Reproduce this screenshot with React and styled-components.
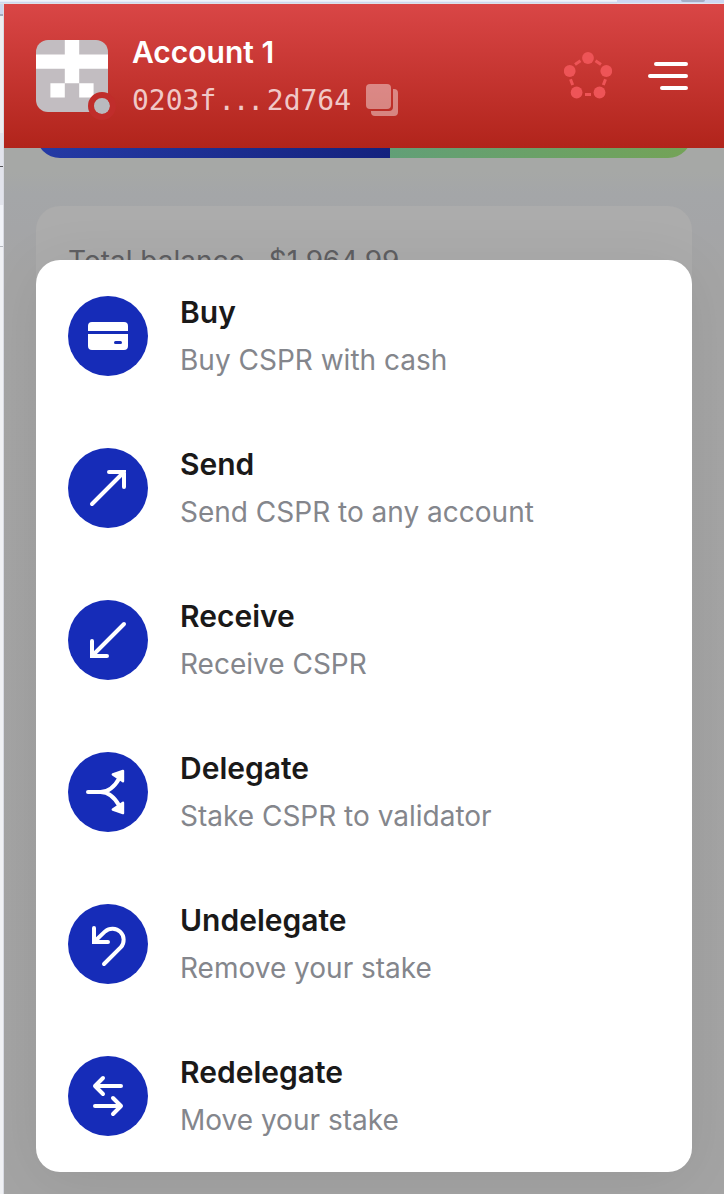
import React from "react";
import styled, { createGlobalStyle } from "styled-components";

const GlobalStyle = createGlobalStyle`
  *, *::before, *::after { box-sizing: border-box; }
  html, body { margin: 0; padding: 0; }
  body {
    width: 724px;
    height: 1194px;
    overflow: hidden;
    font-family: Inter, "Liberation Sans", sans-serif;
    -webkit-font-smoothing: antialiased;
  }
`;

const Desktop = styled.div`
  display: grid;
  grid-template: 4px 1fr / 4px 1fr;
  width: 724px;
  height: 1194px;
  overflow: hidden;
  background: #eeeef0;
`;

const TabStrip = styled.div`
  grid-column: 1 / -1;
  display: flex;
  background: linear-gradient(#f0f3f9 0 1px, #e6ebf7 1px 2px, #cdd7ee 2px 3px, #dde1e8 3px);
`;

const TabEdge = styled.div`
  width: 617px;
`;

const TabRest = styled.div`
  flex: 1;
  padding-left: 64px;
  background: linear-gradient(#cdd8f2 0 3px, #e3e6ec 3px);
`;

const TabButton = styled.div`
  width: 24px;
  height: 2px;
  border-radius: 0 0 12px 12px;
  background: #a4aec6;
`;

const Gutter = styled.div`
  display: flex;
  flex-direction: column;
  border-right: 1px solid #d9dbe3;
`;

const GutterPart = styled.div`
  height: ${(p) => p.$h}px;
  background: ${(p) => p.$color};
`;

const Popup = styled.div`
  position: relative;
  display: flex;
  flex-direction: column;
  overflow: hidden;
  background: linear-gradient(#a6a8a6 0, #a6a8a6 168px, #a4a6a8 190px, #a4a5a7 225px, #a5a5a5 270px, #a4a4a4 100%);
`;

const Header = styled.header`
  position: relative;
  z-index: 2;
  display: flex;
  align-items: center;
  flex: none;
  height: 144px;
  padding: 0 36px 0 32px;
  background: linear-gradient(#d94646, #b1241b);
`;

const Avatar = styled.div`
  position: relative;
  width: 72px;
  height: 72px;
  margin-right: 24px;

  svg { display: block; border-radius: 12px; }
`;

const StatusDot = styled.span`
  position: absolute;
  left: 52px;
  top: 52px;
  width: 28px;
  height: 28px;
  border: 6px solid #c02d2b;
  border-radius: 50%;
  background: #b9babf;
  background-clip: padding-box;
`;

const Identity = styled.div`
  flex: 1;
`;

const AccountName = styled.div`
  font-size: 30px;
  font-weight: 600;
  line-height: 48px;
  color: #fff;
`;

const KeyLine = styled.div`
  display: flex;
  align-items: center;
  height: 48px;
`;

const PublicKey = styled.span`
  display: flex;
  width: 234px;
  padding-top: 2px;
  font-family: "DejaVu Sans Mono", "Liberation Mono", monospace;
  font-size: 28px;
  line-height: 46px;
  color: #f0c8c7;
`;

const Ellipsis = styled.span`
  width: 50.5px;
  padding-left: 2px;
  letter-spacing: -2.4px;
`;

const HeaderActions = styled.div`
  display: flex;
  align-items: center;
  gap: 36px;

  svg { display: block; }
`;

const Page = styled.main`
  display: flex;
  flex: 1;
  flex-direction: column;
  gap: 48px;
  padding: 0 32px;
`;

const BarClip = styled.div`
  display: flex;
  align-items: flex-end;
  height: 10px;
  overflow: hidden;
`;

const NetworkBar = styled.div`
  display: flex;
  flex: none;
  width: 656px;
  height: 64px;
  border-radius: 24px;
  overflow: hidden;
`;

const BarPart = styled.div`
  width: ${(p) => p.$w};
  background: linear-gradient(100deg, ${(p) => p.$from}, ${(p) => p.$to});
`;

const BalanceCard = styled.section`
  display: flex;
  gap: 24px;
  height: 240px;
  padding: 31px 32px;
  border-radius: 24px;
  background: #acacac;
  font-size: 28px;
  line-height: 48px;
  color: #5f5f62;
`;

const Amount = styled.span`
  letter-spacing: -0.15px;
`;

const Menu = styled.nav`
  position: absolute;
  z-index: 1;
  left: 32px;
  top: 256px;
  width: 656px;
  border-radius: 24px;
  background: #fff;
  box-shadow: 0 8px 60px rgba(0, 0, 0, 0.08);
`;

const MenuItem = styled.a`
  display: flex;
  align-items: center;
  gap: 32px;
  height: 152px;
  padding: 0 32px;
`;

const IconDisc = styled.span`
  display: grid;
  place-items: center;
  width: 80px;
  height: 80px;
  border-radius: 50%;
  background: #162cb8;

  svg { display: block; }
`;

const ItemTitle = styled.div`
  font-size: 30px;
  font-weight: 600;
  line-height: 48px;
  color: #1a1919;
`;

const ItemCaption = styled.div`
  font-size: 28px;
  line-height: 48px;
  color: #84868c;
`;

const stroke = { fill: "none", stroke: "#fff", strokeWidth: 4, strokeLinecap: "round", strokeLinejoin: "round" };

const icons = {
  buy: (
    <>
      <path d="M24 26h32a4 4 0 0 1 4 4v5H20v-5a4 4 0 0 1 4-4ZM20 38h40v12a4 4 0 0 1-4 4H24a4 4 0 0 1-4-4Z" fill="#fff" />
      <path d="M47.5 46.5h5" stroke="#162cb8" strokeWidth="3" strokeLinecap="round" />
    </>
  ),
  send: <path d="M24 56 56 24M41 24h15v15" {...stroke} strokeLinejoin="miter" />,
  receive: <path d="M56 24 24 56M24 41v15h15" {...stroke} strokeLinejoin="miter" />,
  delegate: (
    <>
      <path d="M20 40h12.500C41 40 47 34 51.500 26M32.500 40C41 40 47 46 51.500 54" {...stroke} />
      <path d="M55 19v10.200L44.800 22.500Z M55 61v-10.200L44.800 57.500Z" fill="#fff" stroke="#fff" strokeWidth="2.4" strokeLinejoin="round" />
    </>
  ),
  undelegate: <path d="M26 24v14h14M26 38 37.100 27.400A11.200 11.200 0 0 1 52.900 43.200L36 60" {...stroke} strokeLinejoin="miter" />,
  redelegate: <path d="M53 30H27M35 22l-8 8 8 8M27 50h26M45 42l8 8-8 8" {...stroke} />,
};

const items = [
  ["buy", "Buy", "Buy CSPR with cash"],
  ["send", "Send", "Send CSPR to any account"],
  ["receive", "Receive", "Receive CSPR"],
  ["delegate", "Delegate", "Stake CSPR to validator"],
  ["undelegate", "Undelegate", "Remove your stake"],
  ["redelegate", "Redelegate", "Move your stake"],
];

function AccountAvatar() {
  return (
    <Avatar>
      <svg width="72" height="72" viewBox="0 0 5 5">
        <path d="M0 0h5v5H0z" fill="#c2bdc1" />
        <path d="M2 0h1v1h2v1H3v1H2V2H0V1h2zM1 3h1v1H1zM3 3h1v1H3z" fill="#fff" />
      </svg>
      <StatusDot />
    </Avatar>
  );
}

function CopyIcon() {
  return (
    <svg width="32" height="32" viewBox="0 0 32 32" fill="#fff" opacity="0.42">
      <rect width="25" height="25" rx="4" />
      <path d="M27 5h1a4 4 0 0 1 4 4v19a4 4 0 0 1-4 4H9a4 4 0 0 1-4-4v-1h18a4 4 0 0 0 4-4Z" />
    </svg>
  );
}

function NetworkIcon() {
  return (
    <svg width="48" height="48" viewBox="0 0 48 48" fill="#ee5457">
      <circle cx="24" cy="6" r="5.9" />
      <circle cx="5.7" cy="19" r="5.9" />
      <circle cx="42.3" cy="19" r="5.9" />
      <circle cx="12.600" cy="40.500" r="5.9" />
      <circle cx="35.500" cy="40.500" r="5.9" />
      <path d="M11 12.500 16.500 8.700M37 12.500 31.500 8.700M6.500 27.200 8.700 33M41.500 27.200 39.300 33M21 42.400h6" stroke="#ee5457" strokeWidth="3" />
    </svg>
  );
}

function MenuIcon() {
  return (
    <svg width="40" height="28" viewBox="0 0 40 28">
      <path d="M8 2h30M2 14h36M14 26h24" {...stroke} />
    </svg>
  );
}

export default function App() {
  return (
    <>
      <GlobalStyle />
      <Desktop>
        <TabStrip>
          <TabEdge />
          <TabRest><TabButton /></TabRest>
        </TabStrip>
        <Gutter>
          <GutterPart $h={10} $color="#cbd5ec" />
          <GutterPart $h={2} $color="#a2a9bb" />
          <GutterPart $h={117} $color="#eeeef0" />
          <GutterPart $h={33} $color="#e2e4ec" />
          <GutterPart $h={1} $color="#55565a" />
          <GutterPart $h={38} $color="#e2e4ec" />
          <GutterPart $h={41} $color="#f1f3f8" />
          <GutterPart $h={1} $color="#b4b7be" />
          <GutterPart $h={947} $color="#f0f1f4" />
        </Gutter>
        <Popup>
          <Header>
            <AccountAvatar />
            <Identity>
              <AccountName>Account 1</AccountName>
              <KeyLine>
                <PublicKey>0203f<Ellipsis>...</Ellipsis>2d764</PublicKey>
                <CopyIcon />
              </KeyLine>
            </Identity>
            <HeaderActions>
              <NetworkIcon />
              <MenuIcon />
            </HeaderActions>
          </Header>
          <Page>
            <BarClip>
              <NetworkBar>
                <BarPart $w="353.5px" $from="#253ba6" $to="#14227e" />
                <BarPart $w="302.5px" $from="#619f78" $to="#74a357" />
              </NetworkBar>
            </BarClip>
            <BalanceCard>
              <span>Total balance</span>
              <Amount>$1,964.99</Amount>
            </BalanceCard>
          </Page>
          <Menu>
            {items.map(([icon, title, caption]) => (
              <MenuItem key={icon}>
                <IconDisc>
                  <svg width="80" height="80" viewBox="0 0 80 80">{icons[icon]}</svg>
                </IconDisc>
                <div>
                  <ItemTitle>{title}</ItemTitle>
                  <ItemCaption>{caption}</ItemCaption>
                </div>
              </MenuItem>
            ))}
          </Menu>
        </Popup>
      </Desktop>
    </>
  );
}
